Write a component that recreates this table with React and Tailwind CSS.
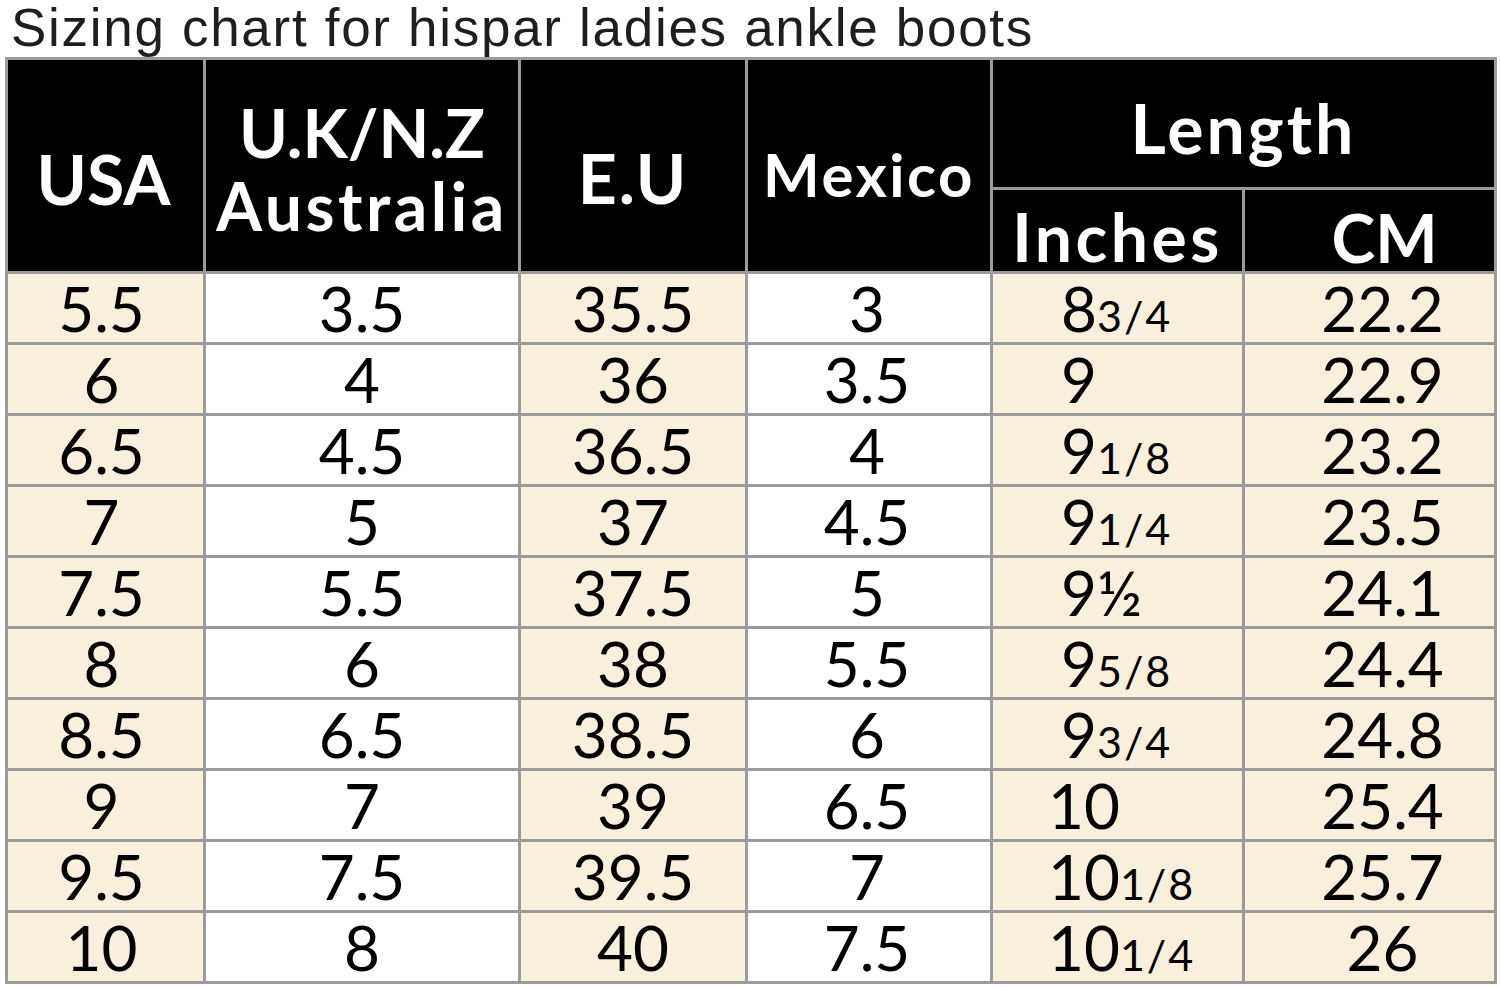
const rows = [
  ['5.5', '3.5', '35.5', '3', ['8', '3/4'], '22.2'],
  ['6', '4', '36', '3.5', ['9', ''], '22.9'],
  ['6.5', '4.5', '36.5', '4', ['9', '1/8'], '23.2'],
  ['7', '5', '37', '4.5', ['9', '1/4'], '23.5'],
  ['7.5', '5.5', '37.5', '5', ['9½', ''], '24.1'],
  ['8', '6', '38', '5.5', ['9', '5/8'], '24.4'],
  ['8.5', '6.5', '38.5', '6', ['9', '3/4'], '24.8'],
  ['9', '7', '39', '6.5', ['10', ''], '25.4'],
  ['9.5', '7.5', '39.5', '7', ['10', '1/8'], '25.7'],
  ['10', '8', '40', '7.5', ['10', '1/4'], '26'],
];

const cream = 'bg-[#f8f0dd]';
const line = 'border-[3px] border-[#9b9b9b]';

export default function App() {
  return (
    <div className="min-h-dvh bg-white">
      {/* Title */}
      <h1 className="pl-[11px] text-[53px] leading-[56px] tracking-[1.7px] text-[#1e1e1e] font-['Liberation_Sans',Arial,sans-serif]">
        Sizing chart for hispar ladies ankle boots
      </h1>

      {/* Chart */}
      <table className={`ml-[5px] mt-[1px] w-[1490px] table-fixed border-collapse ${line} font-['Lato','Open_Sans',sans-serif]`}>
        <colgroup>
          <col className="w-[198px]" />
          <col className="w-[315px]" />
          <col className="w-[227px]" />
          <col className="w-[245px]" />
          <col className="w-[252px]" />
          <col className="w-[252px]" />
        </colgroup>
        <thead className="bg-black font-bold text-white">
          <tr className="h-[130px]">
            <th rowSpan={2} className={`${line} pt-[26px] pr-[4px] text-[68px] leading-none`}>USA</th>
            <th rowSpan={2} className={`${line} pt-[6px] text-[66px] leading-[73px]`}>
              U.K/N.Z<br />
              <span className="tracking-[3.5px]">Australia</span>
            </th>
            <th rowSpan={2} className={`${line} pt-[24px] text-[68px] leading-none tracking-[2px]`}>E.U</th>
            <th rowSpan={2} className={`${line} pt-[16px] text-[60px] leading-none tracking-[2.5px]`}>Mexico</th>
            <th colSpan={2} className={`${line} pt-[8px] text-[68px] leading-none tracking-[3px]`}>Length</th>
          </tr>
          <tr className="h-[84px]">
            <th className={`${line} pt-[12px] text-[66px] leading-none tracking-[3.5px]`}>Inches</th>
            <th className={`${line} pt-[14px] pl-[30px] text-[66px] leading-none`}>CM</th>
          </tr>
        </thead>
        <tbody className="text-[62px] leading-none text-black">
          {rows.map((r, i) => (
            <tr key={i} className="h-[71px]">
              <td className={`${cream} ${line} pr-[8px] text-center`}>{r[0]}</td>
              <td className={`${line} bg-white text-center`}>{r[1]}</td>
              <td className={`${cream} ${line} text-center`}>{r[2]}</td>
              <td className={`${line} bg-white pr-[4px] text-center`}>{r[3]}</td>
              <td className={`${cream} ${line} ${r[4][0] === '10' ? 'pl-[55px]' : 'pl-[68px]'}`}>
                <span>{r[4][0]}</span>
                {r[4][1] && <span className="text-[43px] tracking-[2px]">{r[4][1]}</span>}
              </td>
              <td className={`${cream} ${line} pl-[26px] text-center`}>{r[5]}</td>
            </tr>
          ))}
        </tbody>
      </table>
    </div>
  );
}
